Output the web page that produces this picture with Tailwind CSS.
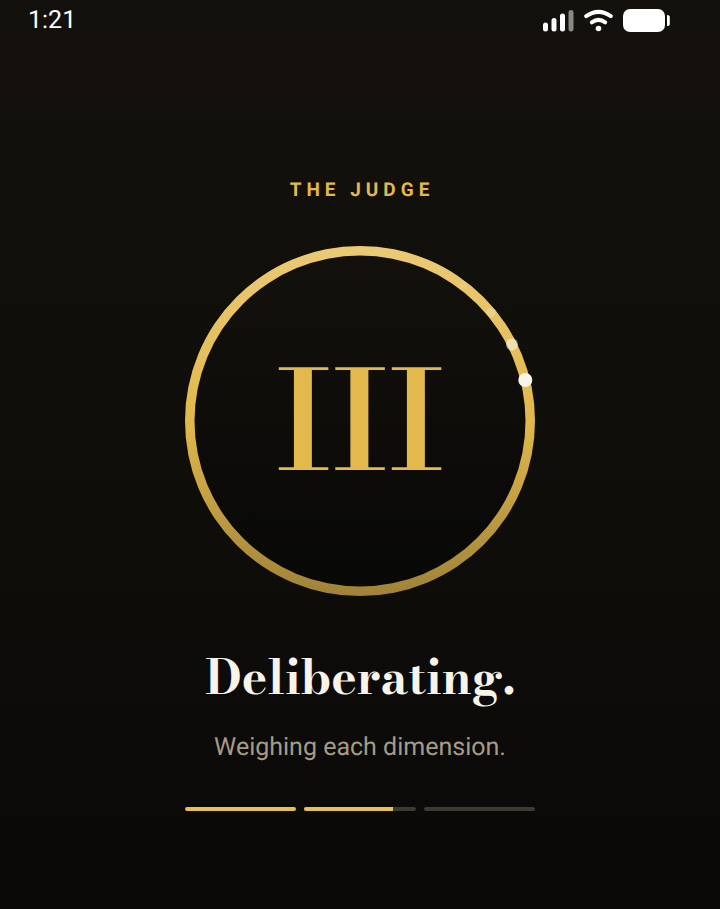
<!DOCTYPE html>
<html lang="en">
<head>
<meta charset="utf-8">
<meta name="viewport" content="width=device-width, initial-scale=1">
<title>The Judge</title>
<script src="https://cdn.jsdelivr.net/npm/@tailwindcss/browser@4"></script>
</head>
<body class="flex min-h-screen flex-col bg-linear-to-b from-[#14110c] via-[#0f0e0a] to-[#0a0908] font-['Roboto',sans-serif] text-[#f8f4ea] [text-rendering:geometricPrecision]">
  <header class="flex h-10 items-center justify-between pr-[49px] pl-7 text-white">
    <time class="pt-0.5 text-[25px] leading-8" datetime="01:21">1:21</time>
    <div class="flex items-center gap-2">
      <svg class="h-6 w-8" viewBox="0 0 32 24" fill="currentColor" role="img" aria-label="Signal">
        <rect x="0" y="14.5" width="5" height="9" rx="2.5"/>
        <rect x="8.5" y="10" width="5" height="13.5" rx="2.5"/>
        <rect x="17" y="5.5" width="5" height="18" rx="2.5"/>
        <rect x="25.500" y="2" width="5" height="21.500" rx="2.5" opacity=".5"/>
      </svg>
      <svg class="h-6 w-8" viewBox="0 0 32 24" fill="none" stroke="currentColor" stroke-width="4" stroke-linecap="round" role="img" aria-label="Wi-Fi">
        <path d="M3.200 8.200Q15.500-.400 27.800 8.200"/>
        <path d="M8.800 14.300Q15.500 9.500 22.200 14.300"/>
        <circle cx="15.500" cy="20.500" r="2.800" fill="currentColor" stroke="none"/>
      </svg>
      <svg class="h-6 w-12" viewBox="0 0 48 24" fill="currentColor" role="img" aria-label="Battery">
        <rect x="0" y="1" width="42" height="23" rx="7"/>
        <path d="M44 7Q46.800 7 46.800 9V16Q46.800 18 44 18Z"/>
      </svg>
    </div>
  </header>

  <main class="flex flex-col items-center px-6 pt-[138px]">
    <p class="pl-1 text-[19px] leading-6 font-bold tracking-[5px] text-[#e3b94d]">THE JUDGE</p>

    <div class="mt-11 grid size-[350px] place-items-center">
      <svg class="col-start-1 row-start-1 size-full" viewBox="0 0 350 350" aria-hidden="true">
        <defs>
          <linearGradient id="ring" x1="0" y1="0" x2="0" y2="1">
            <stop offset="0" stop-color="#ebca75"/>
            <stop offset=".5" stop-color="#e1b84b"/>
            <stop offset="1" stop-color="#a08338"/>
          </linearGradient>
          <linearGradient id="disc" x1="0" y1="0" x2="0" y2="1">
            <stop offset="0" stop-color="#14110c"/>
            <stop offset="1" stop-color="#080807"/>
          </linearGradient>
        </defs>
        <circle cx="175" cy="175" r="170" fill="url(#disc)"/>
        <path fill="url(#ring)" fill-rule="evenodd" d="M175 0a175 175 0 1 1 0 350a175 175 0 1 1 0-350ZM175 9.500a165.500 165.500 0 1 0 0 331a165.500 165.500 0 1 0 0-331Z"/>
        <g fill="#f8f4ea">
          <circle cx="278.500" cy="39.500" r="3.500" opacity=".12"/>
          <circle cx="306" cy="66.500" r="4.700" opacity=".28"/>
          <circle cx="327" cy="98.500" r="6" opacity=".58"/>
          <circle cx="340.300" cy="134" r="7"/>
        </g>
      </svg>
      <span class="col-start-1 row-start-1 pb-0.5 font-['Bodoni_Moda','Liberation_Serif',serif] text-[137px] leading-none font-semibold text-[#e3b94d]">III</span>
    </div>

    <h1 class="mt-12 font-['Bodoni_Moda','Liberation_Serif',serif] text-[48px] leading-[68px] font-bold">Deliberating.</h1>
    <p class="mt-5 text-[25px] leading-8 text-[#a69b87]">Weighing each dimension.</p>

    <div class="mt-[43px] grid w-full max-w-[350px] grid-cols-3 gap-2" role="progressbar" aria-label="Deliberation" aria-valuemin="0" aria-valuemax="3" aria-valuenow="1.8">
      <div class="h-1 overflow-hidden rounded-full bg-[#403a2f]"><div class="h-full bg-[#e6bf55]" style="width:100%"></div></div>
      <div class="h-1 overflow-hidden rounded-full bg-[#403a2f]"><div class="h-full bg-[#e6bf55]" style="width:80%"></div></div>
      <div class="h-1 rounded-full bg-[#403a2f]"></div>
    </div>
  </main>
</body>
</html>
